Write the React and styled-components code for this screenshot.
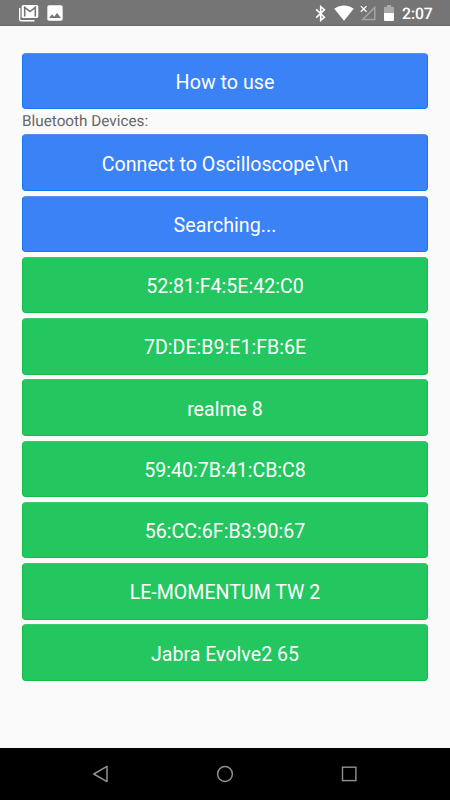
import React from 'react';
import styled, { createGlobalStyle } from 'styled-components';

const GlobalStyle = createGlobalStyle`
    * {
        box-sizing: border-box;
    }

    body {
        margin: 0;
        font-family: Roboto, sans-serif;
        text-rendering: geometricPrecision;
        background: #fafafa;
    }
`;

const Screen = styled.div`
    display: flex;
    flex-direction: column;
    width: 450px;
    height: 800px;
    overflow: hidden;
`;

const StatusBar = styled.header`
    display: flex;
    align-items: center;
    flex: none;
    height: 26px;
    padding: 1px 18px 0 19px;
    background: #757575;
    border-bottom: 1px solid #686868;
    color: #fff;

    svg {
        display: block;
        flex: none;
    }
`;

const Notifications = styled.div`
    display: flex;
    align-items: center;
    gap: 8px;
    margin-right: auto;
`;

const SystemIcons = styled.div`
    display: flex;
    align-items: center;
    gap: 7px;
`;

const Clock = styled.time`
    width: 30px;
    margin-left: 8px;
    padding-top: 2px;
    font-size: 15.8px;
    font-weight: 500;
    line-height: 24px;
    letter-spacing: -0.1px;
    white-space: nowrap;
`;

const Content = styled.main`
    flex: 1;
    padding: 26.6px 22px 0;
`;

const Label = styled.p`
    height: 25.2px;
    margin: 0;
    color: #666;
    font-size: 15.3px;
    line-height: 24px;
`;

const ButtonList = styled.div`
    display: flex;
    flex-direction: column;
    gap: 4.65px;
`;

const Button = styled.button`
    display: block;
    width: 100%;
    height: 56.6px;
    padding: 4px 0 0;
    border: 1px solid ${({ $found }) => ($found ? '#14bd45' : '#0f76f6')};
    border-top-color: ${({ $found }) => ($found ? '#3cc66f' : '#5a90ed')};
    border-radius: 4px;
    background: ${({ $found }) => ($found ? '#24c660' : '#3b82f6')};
    color: #fff;
    font-family: inherit;
    font-size: ${({ $found }) => ($found ? '19.6px' : '19.7px')};
    line-height: 24px;
`;

const NavBar = styled.nav`
    display: flex;
    align-items: center;
    justify-content: space-between;
    flex: none;
    height: 52px;
    padding: 0 92px 1px 91px;
    background: #000;

    svg {
        display: block;
    }
`;

const GmailIcon = () => (
    <svg width="20" height="18" viewBox="0 0 20 18">
        <path d="M.7 4v11.2q0 1.6 1.6 1.6h13.2" fill="none" stroke="#fff" strokeWidth="1.4" />
        <rect x="2.7" y="1" width="16.6" height="13" rx="1.6" fill="#fff" />
        <path d="M5.7 12.6V3.4l5.3 4.2 5.3-4.2v9.2" fill="none" stroke="#757575" strokeWidth="1.6" />
    </svg>
);

const ImageIcon = () => (
    <svg width="16" height="16" viewBox="2.6 2.6 18.8 18.8">
        <path
            fill="#fff"
            d="M21 19V5c0-1.1-.9-2-2-2H5c-1.1 0-2 .9-2 2v14c0 1.1.9 2 2 2h14c1.1 0 2-.9 2-2z"
        />
        <path fill="#757575" d="M8.5 13.5l2.5 3.01L14.5 12l4.5 6H5z" />
    </svg>
);

const BluetoothIcon = () => (
    <svg width="12" height="17" viewBox="0 0 12 17" fill="none" stroke="#fff" strokeWidth="1.6">
        <path d="M1.2 4.3l8.2 7.9-3.7 3.2V1.6l3.7 3.2-8.2 7.9" />
    </svg>
);

const WifiIcon = () => (
    <svg width="20" height="16" viewBox="0 2.5 24 19.2">
        <path
            fill="#fff"
            d="M12.01 21.49L23.64 7c-.45-.34-4.93-4-11.64-4C5.28 3 .81 6.66.36 7l11.63 14.49.01.01.01-.01z"
        />
    </svg>
);

const SignalIcon = () => (
    <svg width="17" height="16" viewBox="-1.5 0 17 16" fill="none">
        <path d="M13.3 2.4v12.1H1.2z" stroke="#a3a3a3" strokeWidth="1.5" />
        <path d="M-1.5 0h8.1v7.5h-8.1z" fill="#757575" />
        <path d="M-.6 1.1l5.6 5.6M5 1.1L-.6 6.7" stroke="#fff" strokeWidth="1.3" />
    </svg>
);

const BatteryIcon = () => (
    <svg width="10" height="16" viewBox="0 0 10 16">
        <path d="M3 0h4v1.7h2q1 0 1 1V8H0V2.7q0-1 1-1h2z" fill="#a9a9a9" />
        <path d="M0 8h10v7q0 1-1 1H1q-1 0-1-1z" fill="#fff" />
    </svg>
);

// The mobile signal icon sits closer to the wifi icon than the rest
const Signal = styled.span`
    margin-left: -1px;
`;

const BackIcon = () => (
    <svg width="18" height="18" viewBox="0 0 18 18" fill="none" stroke="#919191" strokeWidth="1.5">
        <path d="M16 1.4v15.2L2.8 9z" strokeLinejoin="round" />
    </svg>
);

const HomeIcon = () => (
    <svg width="18" height="18" viewBox="0 0 18 18" fill="none" stroke="#919191" strokeWidth="1.5">
        <circle cx="9" cy="9" r="7.4" />
    </svg>
);

const RecentsIcon = () => (
    <svg width="18" height="18" viewBox="0 0 18 18" fill="none" stroke="#919191" strokeWidth="1.4">
        <rect x="2.5" y="2.2" width="13.4" height="13.4" />
    </svg>
);

const devices = [
    '52:81:F4:5E:42:C0',
    '7D:DE:B9:E1:FB:6E',
    'realme 8',
    '59:40:7B:41:CB:C8',
    '56:CC:6F:B3:90:67',
    'LE-MOMENTUM TW 2',
    'Jabra Evolve2 65'
];

const App = () => (
    <>
        <GlobalStyle />
        <Screen>
            <StatusBar>
                <Notifications>
                    <GmailIcon />
                    <ImageIcon />
                </Notifications>
                <SystemIcons>
                    <BluetoothIcon />
                    <WifiIcon />
                    <Signal>
                        <SignalIcon />
                    </Signal>
                    <BatteryIcon />
                </SystemIcons>
                <Clock>2:07</Clock>
            </StatusBar>
            <Content>
                <Button>How to use</Button>
                <Label>Bluetooth Devices:</Label>
                <ButtonList>
                    <Button>{'Connect to Oscilloscope\\r\\n'}</Button>
                    <Button>Searching...</Button>
                    {devices.map(device => (
                        <Button key={device} $found>
                            {device}
                        </Button>
                    ))}
                </ButtonList>
            </Content>
            <NavBar>
                <BackIcon />
                <HomeIcon />
                <RecentsIcon />
            </NavBar>
        </Screen>
    </>
);

export default App;
